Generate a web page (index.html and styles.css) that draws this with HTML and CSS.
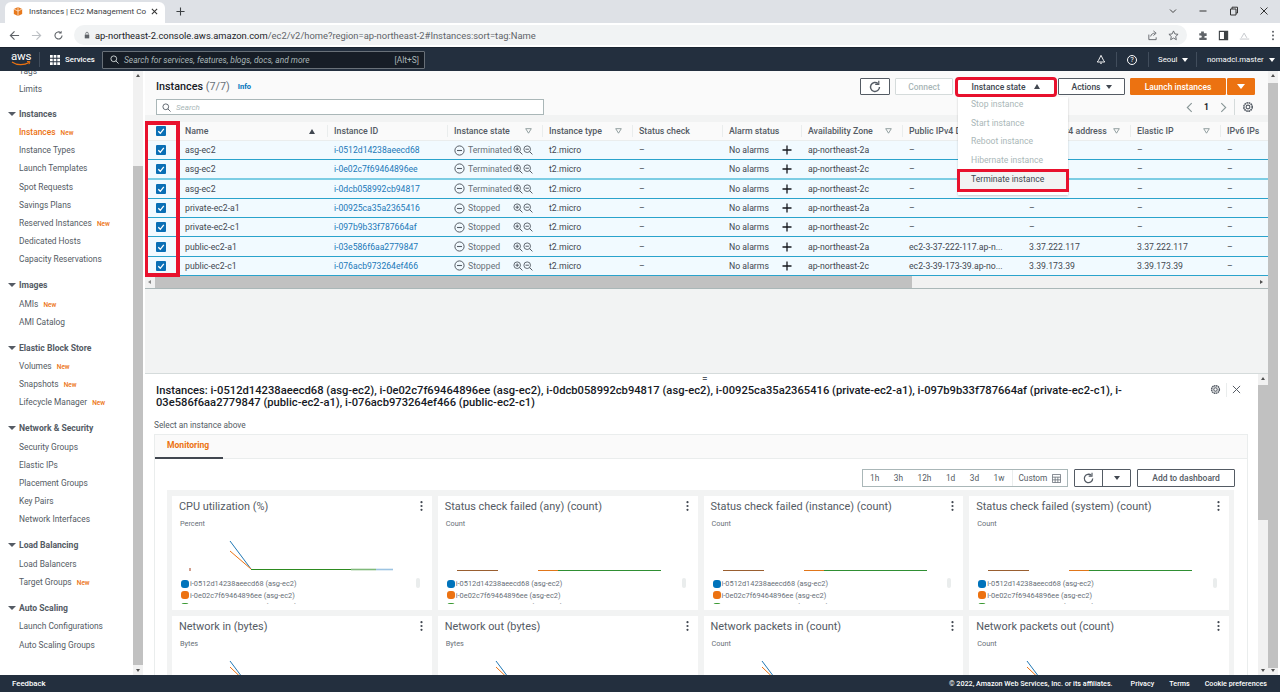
FILE: index.html
```html
<!DOCTYPE html>
<html lang="en">
<head>
<meta charset="utf-8">
<title>Instances | EC2 Management Console</title>
<link rel="stylesheet" href="styles.css">
</head>
<body>
<svg class="defs" width="0" height="0" aria-hidden="true">
  <symbol id="i-gear" viewBox="0 0 12 12"><circle cx="6" cy="6" r="1.9" fill="none" stroke="currentColor" stroke-width="1.1"/><circle cx="6" cy="6" r="4.2" fill="none" stroke="currentColor" stroke-width="1.6" stroke-dasharray="1.7 .5"/></symbol>
  <symbol id="i-refresh" viewBox="0 0 14 14"><path d="M11.5 7a4.5 4.5 0 1 1-1.5-3.4" fill="none" stroke="currentColor" stroke-width="1.4"/><path d="M10.8.8v3.6H7.2" fill="none" stroke="currentColor" stroke-width="1.2"/></symbol>
  <symbol id="i-stop" viewBox="0 0 11 11"><circle cx="5.5" cy="5.5" r="4.6" fill="none" stroke="currentColor" stroke-width="1"/><path d="M3 5.5h5" stroke="currentColor" stroke-width="1.1"/></symbol>
  <symbol id="i-zin" viewBox="0 0 10 10"><circle cx="4.2" cy="4.2" r="3.3" fill="none" stroke="currentColor" stroke-width=".9"/><path d="M2.5 4.2h3.4M4.2 2.5v3.4M6.6 6.6l2.8 2.8" stroke="currentColor" stroke-width="1"/></symbol>
  <symbol id="i-zout" viewBox="0 0 10 10"><circle cx="4.2" cy="4.2" r="3.3" fill="none" stroke="currentColor" stroke-width=".9"/><path d="M2.5 4.2h3.4M6.6 6.6l2.8 2.8" stroke="currentColor" stroke-width="1"/></symbol>
  <symbol id="i-plus" viewBox="0 0 10 10"><path d="M5 .5v9M.5 5h9" stroke="currentColor" stroke-width="1.3"/></symbol>
  <symbol id="i-check" viewBox="0 0 10 10"><rect width="10" height="10" rx="1" fill="#0a6fb5"/><path d="M2.3 5.2l2 2.1 3.5-4.5" fill="none" stroke="#fff" stroke-width="1.3"/></symbol>
  <symbol id="i-filter" viewBox="0 0 7 6"><path d="M.7.7h5.6L3.5 5.2z" fill="none" stroke="currentColor" stroke-width=".9"/></symbol>
  <symbol id="i-kebab" viewBox="0 0 3 10"><circle cx="1.5" cy="1.2" r="1.1"/><circle cx="1.5" cy="5" r="1.1"/><circle cx="1.5" cy="8.8" r="1.1"/></symbol>
  <symbol id="c-cpu" viewBox="0 0 260 46"><path d="M18 38v3" stroke="#a5401e" stroke-width="1"/><path d="M58 11l21 28" stroke="#1f77b4" fill="none"/><path d="M58 21l21 18" stroke="#ec7211" fill="none"/><path d="M79 39.5h100" stroke="#2d8a1f" stroke-width="1"/><path d="M179 39.5h25" stroke="#7fb97a" stroke-width="1.6"/><path d="M204 39.5h17" stroke="#9cc4e2" stroke-width="1.6"/></symbol>
  <symbol id="c-status" viewBox="0 0 260 46"><path d="M19 40.5h41" stroke="#9a5f30" stroke-width="1"/><path d="M100 40.5h20" stroke="#e1761a" stroke-width="1"/><path d="M120 40.5h103" stroke="#2f8f33" stroke-width="1"/></symbol>
  <symbol id="c-net" viewBox="0 0 260 46"><path d="M58 11l21 28" stroke="#1f77b4" fill="none"/><path d="M58 17l21 20" stroke="#ec7211" fill="none"/></symbol>
</svg>

<header class="tabstrip">
  <div class="tab">
    <svg class="favicon" viewBox="0 0 12 12"><path d="M6 .5l5 2.500v6L6 11.500 1 9V3z" fill="#e8791c"/><path d="M6 .5v11M1 3l5 2.500L11 3" stroke="#fff" stroke-width=".8" fill="none"/></svg>
    <span class="tab-title">Instances | EC2 Management Co</span>
    <svg class="tab-x" viewBox="0 0 8 8"><path d="M1 1l6 6M7 1L1 7" stroke="#333" stroke-width="1.2"/></svg>
  </div>
  <svg class="tab-new" viewBox="0 0 10 10"><path d="M5 .5v9M.5 5h9" stroke="#3c4043" stroke-width="1.2"/></svg>
  <div class="win">
    <svg viewBox="0 0 10 10"><path d="M2 3.500L5 6.500 8 3.500" fill="none" stroke="#444" stroke-width="1"/></svg>
    <svg viewBox="0 0 10 10"><path d="M1.500 5h7" stroke="#333" stroke-width="1"/></svg>
    <svg viewBox="0 0 10 10"><path d="M1.500 3H7v6H1.500zM3 3V1.200h5.500V7H7" fill="none" stroke="#333" stroke-width="1"/></svg>
    <svg viewBox="0 0 10 10"><path d="M1.500 1.500l7 7M8.500 1.500l-7 7" stroke="#333" stroke-width="1"/></svg>
  </div>
</header>

<nav class="toolbar">
  <svg class="tb-ic" viewBox="0 0 12 12"><path d="M11 6H2M6 1.500L1.500 6 6 10.500" fill="none" stroke="#5f6368" stroke-width="1.300"/></svg>
  <svg class="tb-ic" viewBox="0 0 12 12"><path d="M1 6h9M6 1.500L10.500 6 6 10.500" fill="none" stroke="#bcc0c4" stroke-width="1.300"/></svg>
  <svg class="tb-ic" viewBox="0 0 14 14"><path d="M11.500 7a4.500 4.500 0 1 1-1.500-3.400" fill="none" stroke="#5f6368" stroke-width="1.400"/><path d="M11 .8v3.600H7.400z" fill="#5f6368"/></svg>
  <div class="omnibox">
    <svg class="lock" viewBox="0 0 8 10"><path d="M1 4.500h6V9.500H1z" fill="#5f6368"/><path d="M2.300 4.500V3a1.700 1.700 0 0 1 3.400 0v1.500" fill="none" stroke="#5f6368"/></svg>
    <span class="url">ap-northeast-2.console.aws.amazon.com<span class="url-dim">/ec2/v2/home?region=ap-northeast-2#Instances:sort=tag:Name</span></span>
    <svg class="omni-ic share" viewBox="0 0 12 12"><path d="M2 5v5.500h8V8M4 7c.5-2.500 2.500-3.500 4.500-3.500M7 1l3 2.500L7 6" fill="none" stroke="#5f6368"/></svg>
    <svg class="omni-ic" viewBox="0 0 12 12"><path d="M6 1l1.500 3.300 3.500.4-2.600 2.400.7 3.500L6 8.800l-3.100 1.800.7-3.500L1 4.700l3.500-.4z" fill="none" stroke="#5f6368"/></svg>
  </div>
  <svg class="ext" viewBox="0 0 12 12"><path d="M4.500 1.500h3v2h3v3h-1.500a1 1 0 0 0 0 2h1.500v2.500h-8v-2.500H4a1.200 1.200 0 0 0 0-2.500H2.500v-2.500h2z" fill="#5f6368"/></svg>
  <svg class="ext" viewBox="0 0 12 12"><path d="M1.500 1.500h9v9h-9z" fill="none" stroke="#3c4043" stroke-width="1.200"/><path d="M6.500 1.500h4v9h-4z" fill="#3c4043"/></svg>
  <svg class="ext" viewBox="0 0 14 12"><path d="M1 10.500h12M3 9l3.500-6L10 9" fill="none" stroke="#b8bcc0"/></svg>
  <svg class="ext dots" viewBox="0 0 4 12"><circle cx="2" cy="2" r="1.100" fill="#5f6368"/><circle cx="2" cy="6" r="1.100" fill="#5f6368"/><circle cx="2" cy="10" r="1.100" fill="#5f6368"/></svg>
</nav>

<header class="awsbar">
  <div class="logo"><span class="logo-text">aws</span><svg class="smile" viewBox="0 0 20 5"><path d="M1 1c5 3.500 12 3.500 17 .5" fill="none" stroke="#ec7211" stroke-width="1.200"/><path d="M16 .5l3 .2-1 2.500" fill="none" stroke="#ec7211"/></svg></div>
  <span class="aws-sep"></span>
  <svg class="grid-ic" viewBox="0 0 11 11"><path d="M0 0h3v3H0zM4 0h3v3H4zM8 0h3v3H8zM0 4h3v3H0zM4 4h3v3H4zM8 4h3v3H8zM0 8h3v3H0zM4 8h3v3H4zM8 8h3v3H8z" fill="#fff"/></svg>
  <span class="services">Services</span>
  <div class="aws-search">
    <svg class="s-ic" viewBox="0 0 10 10"><circle cx="4.200" cy="4.200" r="3.200" fill="none" stroke="#d5dbdb"/><path d="M6.500 6.500l3 3" stroke="#d5dbdb"/></svg>
    <span class="s-ph">Search for services, features, blogs, docs, and more</span>
    <span class="s-key">[Alt+S]</span>
  </div>
  <svg class="bell" viewBox="0 0 12 12"><path d="M6 1L9 7l1.500 2h-9L3 7z" fill="none" stroke="#fff" stroke-width="1.100"/><path d="M4.800 10.500h2.400" stroke="#fff"/></svg>
  <span class="aws-sep s2"></span>
  <span class="help">?</span>
  <span class="aws-sep s3"></span>
  <span class="aws-menu seoul">Seoul <i class="tri-d white"></i></span>
  <span class="aws-sep s4"></span>
  <span class="aws-menu user">nomadcl.master <i class="tri-d white"></i></span>
</header>

<main class="layout">
  <aside class="sidebar">
    <a class="nav-item first">Tags</a>
    <a class="nav-item limits">Limits</a>
    <h3 class="nav-head"><i class="tri-d grey"></i>Instances</h3>
    <a class="nav-item active">Instances <em class="new">New</em></a>
    <a class="nav-item">Instance Types</a>
    <a class="nav-item">Launch Templates</a>
    <a class="nav-item">Spot Requests</a>
    <a class="nav-item">Savings Plans</a>
    <a class="nav-item">Reserved Instances <em class="new">New</em></a>
    <a class="nav-item">Dedicated Hosts</a>
    <a class="nav-item">Capacity Reservations</a>
    <h3 class="nav-head"><i class="tri-d grey"></i>Images</h3>
    <a class="nav-item">AMIs <em class="new">New</em></a>
    <a class="nav-item">AMI Catalog</a>
    <h3 class="nav-head"><i class="tri-d grey"></i>Elastic Block Store</h3>
    <a class="nav-item">Volumes <em class="new">New</em></a>
    <a class="nav-item">Snapshots <em class="new">New</em></a>
    <a class="nav-item">Lifecycle Manager <em class="new">New</em></a>
    <h3 class="nav-head"><i class="tri-d grey"></i>Network &amp; Security</h3>
    <a class="nav-item">Security Groups</a>
    <a class="nav-item">Elastic IPs</a>
    <a class="nav-item">Placement Groups</a>
    <a class="nav-item">Key Pairs</a>
    <a class="nav-item">Network Interfaces</a>
    <h3 class="nav-head"><i class="tri-d grey"></i>Load Balancing</h3>
    <a class="nav-item">Load Balancers</a>
    <a class="nav-item">Target Groups <em class="new">New</em></a>
    <h3 class="nav-head"><i class="tri-d grey"></i>Auto Scaling</h3>
    <a class="nav-item">Launch Configurations</a>
    <a class="nav-item">Auto Scaling Groups</a>
  </aside>
  <div class="vscroll side-scroll"><i class="arrow-up"></i><b class="thumb"></b><i class="arrow-down"></i></div>

  <div class="content">
    <section class="top">
      <div class="bar">
        <h1 class="page-title">Instances <span class="count">(7/7)</span></h1>
        <a class="info">Info</a>
        <button class="btn icon-btn"><svg class="btn-ic"><use href="#i-refresh"/></svg></button>
        <button class="btn disabled">Connect</button>
        <button class="btn state-btn">Instance state <i class="tri-u"></i></button>
        <button class="btn actions">Actions <i class="tri-d dark"></i></button>
        <div class="launch"><button class="btn primary">Launch instances</button><button class="btn primary caret"><i class="tri-d white big"></i></button></div>
      </div>
      <div class="bar two">
        <label class="search"><svg class="search-ic" viewBox="0 0 10 10"><circle cx="4.200" cy="4.200" r="3.200" fill="none" stroke="#545b64"/><path d="M6.500 6.500l3 3" stroke="#545b64"/></svg><span class="search-ph">Search</span></label>
        <div class="pager">
          <svg class="pg-arrow" viewBox="0 0 6 10"><path d="M5 1L1 5l4 4" fill="none" stroke="#879596"/></svg>
          <span class="pg-num">1</span>
          <svg class="pg-arrow" viewBox="0 0 6 10"><path d="M1 1l4 4-4 4" fill="none" stroke="#879596"/></svg>
          <span class="pg-sep"></span>
          <svg class="pg-gear"><use href="#i-gear"/></svg>
        </div>
      </div>

      <div class="table">
        <div class="row head">
          <div class="cell cb"><svg class="check"><use href="#i-check"/></svg></div>
          <div class="cell">Name<i class="tri-u sort"></i></div>
          <div class="cell">Instance ID</div>
          <div class="cell">Instance state<svg class="filter"><use href="#i-filter"/></svg></div>
          <div class="cell">Instance type<svg class="filter"><use href="#i-filter"/></svg></div>
          <div class="cell">Status check</div>
          <div class="cell">Alarm status</div>
          <div class="cell">Availability Zone<svg class="filter"><use href="#i-filter"/></svg></div>
          <div class="cell">Public IPv4 DNS<svg class="filter"><use href="#i-filter"/></svg></div>
          <div class="cell">Public IPv4 address<svg class="filter"><use href="#i-filter"/></svg></div>
          <div class="cell">Elastic IP<svg class="filter"><use href="#i-filter"/></svg></div>
          <div class="cell">IPv6 IPs</div>
        </div>

        <div class="row">
          <div class="cell cb"><svg class="check"><use href="#i-check"/></svg></div>
          <div class="cell">asg-ec2</div><div class="cell link">i-0512d14238aeecd68</div>
          <div class="cell state"><svg class="st-ic"><use href="#i-stop"/></svg><span class="st-tx">Terminated</span><svg class="z-ic"><use href="#i-zin"/></svg><svg class="z-ic"><use href="#i-zout"/></svg></div>
          <div class="cell">t2.micro</div><div class="cell">–</div>
          <div class="cell">No alarms<svg class="plus"><use href="#i-plus"/></svg></div>
          <div class="cell">ap-northeast-2a</div><div class="cell">–</div><div class="cell">–</div><div class="cell">–</div><div class="cell">–</div>
        </div>
        <div class="row thick">
          <div class="cell cb"><svg class="check"><use href="#i-check"/></svg></div>
          <div class="cell">asg-ec2</div><div class="cell link">i-0e02c7f69464896ee</div>
          <div class="cell state"><svg class="st-ic"><use href="#i-stop"/></svg><span class="st-tx">Terminated</span><svg class="z-ic"><use href="#i-zin"/></svg><svg class="z-ic"><use href="#i-zout"/></svg></div>
          <div class="cell">t2.micro</div><div class="cell">–</div>
          <div class="cell">No alarms<svg class="plus"><use href="#i-plus"/></svg></div>
          <div class="cell">ap-northeast-2c</div><div class="cell">–</div><div class="cell">–</div><div class="cell">–</div><div class="cell">–</div>
        </div>
        <div class="row">
          <div class="cell cb"><svg class="check"><use href="#i-check"/></svg></div>
          <div class="cell">asg-ec2</div><div class="cell link">i-0dcb058992cb94817</div>
          <div class="cell state"><svg class="st-ic"><use href="#i-stop"/></svg><span class="st-tx">Terminated</span><svg class="z-ic"><use href="#i-zin"/></svg><svg class="z-ic"><use href="#i-zout"/></svg></div>
          <div class="cell">t2.micro</div><div class="cell">–</div>
          <div class="cell">No alarms<svg class="plus"><use href="#i-plus"/></svg></div>
          <div class="cell">ap-northeast-2c</div><div class="cell">–</div><div class="cell">–</div><div class="cell">–</div><div class="cell">–</div>
        </div>
        <div class="row">
          <div class="cell cb"><svg class="check"><use href="#i-check"/></svg></div>
          <div class="cell">private-ec2-a1</div><div class="cell link">i-00925ca35a2365416</div>
          <div class="cell state"><svg class="st-ic"><use href="#i-stop"/></svg><span class="st-tx">Stopped</span><svg class="z-ic"><use href="#i-zin"/></svg><svg class="z-ic"><use href="#i-zout"/></svg></div>
          <div class="cell">t2.micro</div><div class="cell">–</div>
          <div class="cell">No alarms<svg class="plus"><use href="#i-plus"/></svg></div>
          <div class="cell">ap-northeast-2a</div><div class="cell">–</div><div class="cell">–</div><div class="cell">–</div><div class="cell">–</div>
        </div>
        <div class="row">
          <div class="cell cb"><svg class="check"><use href="#i-check"/></svg></div>
          <div class="cell">private-ec2-c1</div><div class="cell link">i-097b9b33f787664af</div>
          <div class="cell state"><svg class="st-ic"><use href="#i-stop"/></svg><span class="st-tx">Stopped</span><svg class="z-ic"><use href="#i-zin"/></svg><svg class="z-ic"><use href="#i-zout"/></svg></div>
          <div class="cell">t2.micro</div><div class="cell">–</div>
          <div class="cell">No alarms<svg class="plus"><use href="#i-plus"/></svg></div>
          <div class="cell">ap-northeast-2c</div><div class="cell">–</div><div class="cell">–</div><div class="cell">–</div><div class="cell">–</div>
        </div>
        <div class="row">
          <div class="cell cb"><svg class="check"><use href="#i-check"/></svg></div>
          <div class="cell">public-ec2-a1</div><div class="cell link">i-03e586f6aa2779847</div>
          <div class="cell state"><svg class="st-ic"><use href="#i-stop"/></svg><span class="st-tx">Stopped</span><svg class="z-ic"><use href="#i-zin"/></svg><svg class="z-ic"><use href="#i-zout"/></svg></div>
          <div class="cell">t2.micro</div><div class="cell">–</div>
          <div class="cell">No alarms<svg class="plus"><use href="#i-plus"/></svg></div>
          <div class="cell">ap-northeast-2a</div><div class="cell">ec2-3-37-222-117.ap-n...</div><div class="cell">3.37.222.117</div><div class="cell">3.37.222.117</div><div class="cell">–</div>
        </div>
        <div class="row">
          <div class="cell cb"><svg class="check"><use href="#i-check"/></svg></div>
          <div class="cell">public-ec2-c1</div><div class="cell link">i-076acb973264ef466</div>
          <div class="cell state"><svg class="st-ic"><use href="#i-stop"/></svg><span class="st-tx">Stopped</span><svg class="z-ic"><use href="#i-zin"/></svg><svg class="z-ic"><use href="#i-zout"/></svg></div>
          <div class="cell">t2.micro</div><div class="cell">–</div>
          <div class="cell">No alarms<svg class="plus"><use href="#i-plus"/></svg></div>
          <div class="cell">ap-northeast-2c</div><div class="cell">ec2-3-39-173-39.ap-no...</div><div class="cell">3.39.173.39</div><div class="cell">3.39.173.39</div><div class="cell">–</div>
        </div>
      </div>
      <div class="hscroll"><i class="arrow-left"></i><b class="hthumb"></b><i class="arrow-right"></i></div>

      <div class="red-col"></div>
      <ul class="dropdown">
        <li>Stop instance</li>
        <li>Start instance</li>
        <li>Reboot instance</li>
        <li>Hibernate instance</li>
        <li class="term">Terminate instance</li>
      </ul>
    </section>

    <section class="lower">
      <span class="splitter">=</span>
      <div class="lower-main">
        <div class="lower-head">
          <h2 class="lower-title">Instances: i-0512d14238aeecd68 (asg-ec2), i-0e02c7f69464896ee (asg-ec2), i-0dcb058992cb94817 (asg-ec2), i-00925ca35a2365416 (private-ec2-a1), i-097b9b33f787664af (private-ec2-c1), i-03e586f6aa2779847 (public-ec2-a1), i-076acb973264ef466 (public-ec2-c1)</h2>
          <svg class="lh-gear"><use href="#i-gear"/></svg>
          <span class="lh-sep"></span>
          <svg class="lh-x" viewBox="0 0 10 10"><path d="M1 1l8 8M9 1L1 9" stroke="#545b64" stroke-width="1.100"/></svg>
        </div>
        <p class="select-note">Select an instance above</p>
        <div class="tabs">
          <div class="tab-head"><span class="mon-tab">Monitoring</span></div>
          <div class="tab-body">
            <div class="range-row">
              <div class="range">
                <span>1h</span><span>3h</span><span>12h</span><span>1d</span><span>3d</span><span>1w</span>
                <span class="custom">Custom <svg class="cal" viewBox="0 0 10 10"><path d="M.5.5h9v9h-9zM.5 3.500h9M3.500 3.500v6M6.500 3.500v6M.5 6.500h9" fill="none" stroke="#687078" stroke-width=".9"/></svg></span>
              </div>
              <div class="split"><span class="split-a"><svg class="btn-ic"><use href="#i-refresh"/></svg></span><span class="split-b"><i class="tri-d dark"></i></span></div>
              <button class="btn add">Add to dashboard</button>
            </div>
            <div class="cards">
              <article class="card">
                <div class="card-top"><h4 class="card-title">CPU utilization (%)</h4><svg class="kebab"><use href="#i-kebab"/></svg></div>
                <p class="unit">Percent</p>
                <svg class="chart"><use href="#c-cpu"/></svg>
                <div class="legend"><p class="lg"><i class="dot blue"></i>i-0512d14238aeecd68 (asg-ec2)</p><p class="lg"><i class="dot orange"></i>i-0e02c7f69464896ee (asg-ec2)</p><p class="lg"><i class="dot green"></i>i-0dcb058992cb94817 (asg-ec2)</p><b class="lg-thumb"></b></div>
              </article>
              <article class="card">
                <div class="card-top"><h4 class="card-title">Status check failed (any) (count)</h4><svg class="kebab"><use href="#i-kebab"/></svg></div>
                <p class="unit">Count</p>
                <svg class="chart"><use href="#c-status"/></svg>
                <div class="legend"><p class="lg"><i class="dot blue"></i>i-0512d14238aeecd68 (asg-ec2)</p><p class="lg"><i class="dot orange"></i>i-0e02c7f69464896ee (asg-ec2)</p><p class="lg"><i class="dot green"></i>i-0dcb058992cb94817 (asg-ec2)</p><b class="lg-thumb"></b></div>
              </article>
              <article class="card">
                <div class="card-top"><h4 class="card-title">Status check failed (instance) (count)</h4><svg class="kebab"><use href="#i-kebab"/></svg></div>
                <p class="unit">Count</p>
                <svg class="chart"><use href="#c-status"/></svg>
                <div class="legend"><p class="lg"><i class="dot blue"></i>i-0512d14238aeecd68 (asg-ec2)</p><p class="lg"><i class="dot orange"></i>i-0e02c7f69464896ee (asg-ec2)</p><p class="lg"><i class="dot green"></i>i-0dcb058992cb94817 (asg-ec2)</p><b class="lg-thumb"></b></div>
              </article>
              <article class="card">
                <div class="card-top"><h4 class="card-title">Status check failed (system) (count)</h4><svg class="kebab"><use href="#i-kebab"/></svg></div>
                <p class="unit">Count</p>
                <svg class="chart"><use href="#c-status"/></svg>
                <div class="legend"><p class="lg"><i class="dot blue"></i>i-0512d14238aeecd68 (asg-ec2)</p><p class="lg"><i class="dot orange"></i>i-0e02c7f69464896ee (asg-ec2)</p><p class="lg"><i class="dot green"></i>i-0dcb058992cb94817 (asg-ec2)</p><b class="lg-thumb"></b></div>
              </article>
              <article class="card">
                <div class="card-top"><h4 class="card-title">Network in (bytes)</h4><svg class="kebab"><use href="#i-kebab"/></svg></div>
                <p class="unit">Bytes</p>
                <svg class="chart"><use href="#c-net"/></svg>
              </article>
              <article class="card">
                <div class="card-top"><h4 class="card-title">Network out (bytes)</h4><svg class="kebab"><use href="#i-kebab"/></svg></div>
                <p class="unit">Bytes</p>
                <svg class="chart"><use href="#c-net"/></svg>
              </article>
              <article class="card">
                <div class="card-top"><h4 class="card-title">Network packets in (count)</h4><svg class="kebab"><use href="#i-kebab"/></svg></div>
                <p class="unit">Count</p>
                <svg class="chart"><use href="#c-net"/></svg>
              </article>
              <article class="card">
                <div class="card-top"><h4 class="card-title">Network packets out (count)</h4><svg class="kebab"><use href="#i-kebab"/></svg></div>
                <p class="unit">Count</p>
                <svg class="chart"><use href="#c-net"/></svg>
              </article>
            </div>
          </div>
        </div>
      </div>
      <div class="vscroll lower-scroll"><i class="arrow-up"></i><b class="thumb"></b><i class="arrow-down"></i></div>
    </section>
  </div>
  <div class="vscroll page-scroll"><i class="arrow-up"></i><b class="thumb"></b><i class="arrow-down"></i></div>
</main>

<footer class="footer">
  <span class="feedback">Feedback</span>
  <span class="copy">© 2022, Amazon Web Services, Inc. or its affiliates.</span>
  <span>Privacy</span>
  <span>Terms</span>
  <span>Cookie preferences</span>
</footer>
</body>
</html>
```

FILE: styles.css
```css
* { box-sizing: border-box; }
html, body { margin: 0; height: 100%; }
body {
  width: 1280px; height: 692px; overflow: hidden;
  display: flex; flex-direction: column;
  font-family: Roboto, "Liberation Sans", sans-serif;
  font-size: 9px; color: #16191f; background: #fff;
}
.defs { position: absolute; }
h1, h2, h3, h4, p, ul { margin: 0; padding: 0; font-weight: normal; }
i, em { font-style: normal; }
button { font-family: inherit; }

/* browser chrome */
.tabstrip { height: 23px; background: #dee1e6; display: flex; align-items: flex-end; flex: none; }
.tab { width: 160px; height: 21px; margin-left: 5px; background: #fff; border-radius: 6px 6px 0 0; display: flex; align-items: center; padding: 0 7px 3px 8px; }
.favicon { width: 10px; height: 11px; flex: none; }
.tab-title { margin-left: 6px; flex: none; white-space: nowrap; font-size: 8.1px; color: #3c4043; }
.tab-x { width: 7px; height: 7px; margin-left: auto; flex: none; }
.tab-new { width: 9px; height: 9px; margin: 0 0 7px 11px; }
.win { margin-left: auto; display: flex; gap: 20.5px; padding: 0 11px 7px 0; }
.win svg { width: 10px; height: 10px; }
.toolbar { height: 24px; background: #fff; display: flex; align-items: center; padding-left: 9px; flex: none; }
.tb-ic { width: 11px; height: 11px; margin-right: 11px; }
.omnibox { width: 1113px; height: 20px; margin-left: -1px; background: #f1f3f4; border-radius: 10px; display: flex; align-items: center; padding: 0 8px 0 10px; }
.lock { width: 6px; height: 8px; flex: none; margin-right: 5px; }
.url { font-size: 9.4px; color: #202124; white-space: nowrap; }
.url-dim { color: #5f6368; }
.omni-ic { width: 11px; height: 11px; margin-left: 10px; }
.share { margin-left: auto; }
.ext { width: 11px; height: 11px; margin-left: 10px; flex: none; }
.ext:first-of-type { margin-left: 0; }
.dots { width: 4px; margin-left: 21px; }

/* aws nav */
.awsbar { height: 24px; background: #232f3e; display: flex; align-items: center; flex: none; color: #fff; border-top: 1px solid #1a2430; }
.logo { width: 39px; padding-left: 11px; display: flex; flex-direction: column; align-items: flex-start; height: 20px; }
.logo-text { font-size: 11.5px; line-height: 12px; letter-spacing: -.2px; }
.smile { width: 20px; height: 5px; margin-top: -1px; }
.aws-sep { width: 1px; height: 15px; background: #414d5c; flex: none; }
.grid-ic { width: 10px; height: 10px; margin-left: 10px; }
.services { margin-left: 5px; font-size: 7.8px; font-weight: 500; width: 37px; }
.aws-search { width: 323px; height: 18px; background: #161d26; border: 1px solid #687078; border-radius: 1px; display: flex; align-items: center; padding: 0 5px 0 7px; color: #aab7b8; font-size: 8.4px; }
.s-ic { width: 9px; height: 9px; }
.s-ph { margin-left: 5px; font-style: italic; }
.s-key { margin-left: auto; }
.bell { width: 10px; height: 11px; margin-left: 671px; }
.s2 { margin-left: 10px; }
.help { width: 10px; height: 10px; margin-left: 10px; border: 1px solid #fff; border-radius: 50%; font-size: 7.5px; line-height: 8px; text-align: center; }
.s3 { margin-left: 11px; }
.aws-menu { font-size: 7.8px; white-space: nowrap; display: flex; align-items: center; gap: 5px; }
.seoul { margin-left: 9px; width: 38px; }
.user { margin-left: 10px; }
.tri-d { display: inline-block; width: 0; height: 0; border: 3.5px solid transparent; border-bottom: 0; border-top: 4px solid #fff; }
.tri-d.white { border-top-color: #fff; }
.tri-d.grey { border-top-color: #545b64; margin-right: 3px; border-left-width: 4px; border-right-width: 4px; }
.tri-d.dark { border-top-color: #414750; }
.tri-d.big { border-left-width: 4px; border-right-width: 4px; border-top-width: 5px; }
.tri-u { display: inline-block; width: 0; height: 0; border: 3.5px solid transparent; border-top: 0; border-bottom: 5px solid #414750; margin-left: 5px; }

/* layout */
.layout { flex: 1; display: flex; min-height: 0; }
.sidebar { width: 133px; flex: none; background: #fff; overflow: hidden; padding-left: 8px; }
.nav-item { display: block; height: 18.15px; line-height: 18px; padding-left: 11px; font-size: 8.4px; color: #545b64; white-space: nowrap; }
.nav-item.first { margin-top: -9px; }
.nav-item.limits { margin-bottom: -1.5px; }
.nav-item.active { color: #ec7211; font-weight: 500; }
.new { font-size: 6.5px; color: #ec7211; margin-left: 3px; font-weight: 500; }
.nav-head { height: 18.8px; line-height: 18px; margin-top: 7.5px; font-size: 8.6px; font-weight: 700; color: #545b64; white-space: nowrap; display: flex; align-items: center; }
.vscroll { flex: none; width: 10px; background: #f1f1f1; display: flex; flex-direction: column; align-items: center; }
.thumb { display: block; width: 100%; background: #c1c1c1; }
.arrow-up, .arrow-down { flex: none; width: 0; height: 0; border: 2.5px solid transparent; margin: 3px 0; }
.arrow-up { border-top: 0; border-bottom: 3px solid #505050; }
.arrow-down { border-bottom: 0; border-top: 3px solid #505050; }
.side-scroll .thumb { height: 499px; margin-top: 86px; }
.side-scroll { margin-right: 2px; }
.side-scroll .arrow-down { margin-top: 4px; }
.page-scroll { width: 12px; border-right: 2px solid #fff; }
.page-scroll .thumb { height: 587px; margin-top: 3px; }
.page-scroll .arrow-down { margin-top: 1px; }
.content { flex: 1; min-width: 0; display: flex; flex-direction: column; }

/* top panel */
.top { position: relative; height: 302px; flex: none; background: #f2f3f3; }
.bar { padding: 7px 13px 0 11px; height: 24px; display: flex; align-items: center; gap: 5px; background: #fafafa; }
.page-title { font-size: 10.8px; font-weight: 500; color: #16191f; }
.count { color: #687078; font-weight: 400; }
.info { font-size: 7.5px; font-weight: 700; color: #0073bb; margin-left: 3px; margin-right: auto; }
.btn { height: 17px; background: #fff; border: 1px solid #545b64; border-radius: 1px; font-size: 8.5px; font-weight: 500; color: #545b64; padding: 0; display: flex; align-items: center; justify-content: center; }
.btn-ic { width: 14px; height: 14px; color: #545b64; }
.icon-btn { width: 30px; }
.disabled { width: 58px; color: #aab7b8; border-color: #d5dbdb; }
.state-btn { width: 96px; height: 14px; margin: 0 -1px 0 0; border: 0; outline: 3px solid #e8112d; gap: 4px; color: #414750; }
.actions { width: 67px; gap: 5px; color: #414750; }
.launch { display: flex; gap: 1px; }
.primary { background: #ec7211; border-color: #ec7211; color: #fff; width: 96px; }
.caret { width: 28px; }
.two { height: 20px; padding-top: 4px; padding-right: 14px; gap: 0; }
.search { width: 388px; height: 16px; background: #fff; border: 1px solid #aab7b8; display: flex; align-items: center; padding-left: 5px; }
.search-ic { width: 9px; height: 9px; }
.search-ph { margin-left: 5px; font-size: 8px; font-style: italic; color: #aab7b8; }
.pager { margin-left: auto; display: flex; align-items: center; }
.pg-arrow { width: 7px; height: 11px; }
.pg-num { margin: 0 11px; font-size: 8.5px; font-weight: 700; color: #16191f; }
.pg-sep { width: 1px; height: 16px; background: #d5dbdb; margin: 0 7px 0 7px; }
.pg-gear { width: 12px; height: 12px; color: #545b64; }

/* table */
.table { margin-top: 7px; }
.row { display: grid; grid-template-columns: 33px 149px 120px 95px 90px 90px 79px 101px 120px 108px 90px 48px; height: 19.3px; background: #f1faff; border-bottom: 1px solid #2aa3cc; align-items: center; overflow: hidden; }
.row.thick { border-bottom-color: #7ccde4; border-bottom-width: 2px; }
.row.head { height: 19px; background: #fafafa; border-bottom: 1px solid #eaeded; font-weight: 500; color: #545b64; }
.row.head .cell { font-size: 8.8px; font-weight: 500; position: relative; padding-right: 10px; color: #545b64; }
.row.head .cell + .cell::before { content: ""; position: absolute; left: 0; top: 3px; bottom: 3px; width: 1px; background: #eaeded; }
.cell { padding-left: 7px; font-size: 8.7px; color: #414750; white-space: nowrap; display: flex; align-items: center; overflow: hidden; height: 100%; }
.cell.cb { padding-left: 11px; }
.check { width: 10px; height: 10px; }
.link { color: #1a78b8; font-size: 8.6px; }
.sort { margin-left: auto; margin-right: 2px; }
.filter { width: 7px; height: 6px; color: #879596; margin-left: auto; flex: none; }
.state { color: #687078; }
.st-ic { width: 11px; height: 11px; color: #545b64; flex: none; }
.st-tx { width: 44px; margin-left: 3px; flex: none; overflow: visible; }
.z-ic { width: 10px; height: 10px; color: #545b64; flex: none; }
.st-tx + .z-ic { margin-left: 1px; }
.plus { width: 10px; height: 10px; color: #16191f; margin-left: 13px; flex: none; }
.hscroll { height: 13px; background: #f1f1f1; border-bottom: 1px solid #aab7b8; display: flex; align-items: center; padding-left: 3px; }
.hthumb { display: block; width: 757px; height: 100%; margin-left: 4px; background: #c1c1c1; }
.arrow-left, .arrow-right { width: 0; height: 0; border: 2.5px solid transparent; flex: none; }
.arrow-left { border-left: 0; border-right: 3px solid #888; }
.arrow-right { border-right: 0; border-left: 3px solid #505050; margin-left: auto; margin-right: 5px; }
.red-col { position: absolute; left: 0; top: 50px; width: 35px; height: 156px; border: 4px solid #e8112d; border-left-width: 3px; pointer-events: none; }
.dropdown { position: absolute; left: 813px; top: 26px; width: 110px; height: 98px; list-style: none; background: #fff; box-shadow: 0 1px 2px rgba(0,0,0,.2); }
.dropdown li { height: 18.7px; line-height: 15px; padding: 0 0 0 13px; font-size: 8.6px; color: #aab7b8; }
.dropdown li.term { position: absolute; left: -1px; top: 72px; width: 112px; height: 23px; line-height: 15px; padding-left: 11px; color: #414750; background: #f2f3f3; border: 3px solid #e8112d; }

/* lower panel */
.lower { position: relative; flex: 1; min-height: 0; display: flex; background: #fff; border-top: 1px solid #d5dbdb; overflow: hidden; }
.splitter { position: absolute; left: 557px; top: 0; font-size: 10px; line-height: 10px; color: #545b64; }
.lower-main { flex: 1; min-width: 0; padding: 11px 10px 0 9px; }
.lower-head { display: flex; align-items: flex-start; padding-left: 2px; min-height: 24px; }
.lower-title { width: 968px; font-size: 11.2px; line-height: 12px; font-weight: 500; color: #16191f; }
.lh-gear { width: 11px; height: 11px; margin: -1px 0 0 86px; color: #545b64; flex: none; }
.lh-sep { width: 1px; height: 14px; background: #eaeded; margin: -2px 5px 0 5px; flex: none; }
.lh-x { width: 9px; height: 9px; margin: 0; flex: none; }
.select-note { margin-top: 10px; height: 12px; line-height: 12px; font-size: 8.3px; color: #545b64; }
.tabs { margin-top: 3px; border: 1px solid #eaeded; border-bottom: 0; }
.tab-head { height: 24px; background: #fafafa; border-bottom: 1px solid #eaeded; }
.mon-tab { display: block; width: 68px; height: 24px; line-height: 21px; padding-left: 12px; font-size: 8.6px; font-weight: 700; color: #ec7211; border-bottom: 2px solid #414750; }
.tab-body { padding: 8px 13px 0 12px; }
.range-row { display: flex; justify-content: flex-end; align-items: center; gap: 6px; height: 23px; margin-right: -1px; padding-bottom: 1px; }
.range { width: 206px; height: 18px; border: 1px solid #aab7b8; display: flex; align-items: center; padding-left: 7px; gap: 14.5px; font-size: 8.3px; color: #545b64; }
.range .custom { margin-left: -6.5px; padding-left: 5px; display: flex; align-items: center; gap: 5px; white-space: nowrap; border-left: 1px solid #eaeded; height: 100%; }
.cal { width: 9px; height: 9px; }
.split { width: 57px; height: 18px; display: flex; border: 1px solid #545b64; border-radius: 1px; }
.split-a { width: 28px; display: flex; align-items: center; justify-content: center; border-right: 1px solid #545b64; }
.split-b { flex: 1; display: flex; align-items: center; justify-content: center; }
.split .btn-ic { width: 13px; height: 13px; }
.add { width: 98px; height: 18px; }
.cards { display: grid; grid-template-columns: repeat(4, minmax(0, 1fr)); grid-auto-rows: 114px; gap: 6px; padding: 6px 5px; background: #f2f3f3; }
.card { background: #fff; padding: 0 7px; position: relative; overflow: hidden; min-width: 0; }
.card-top { display: flex; align-items: center; justify-content: space-between; height: 20px; padding-right: 2px; }
.card-title { font-size: 10.9px; color: #545b64; white-space: nowrap; }
.kebab { width: 3px; height: 10px; fill: #414750; flex: none; }
.unit { height: 12px; line-height: 12px; margin: 2px 0 0 1px; font-size: 7.3px; color: #687078; }
.chart { display: block; width: 260px; height: 46px; margin-left: -7px; }
.legend { position: relative; height: 26px; margin-top: 2px; padding: 0 0 0 2px; overflow: hidden; }
.lg { height: 11.5px; line-height: 11px; display: flex; align-items: center; font-size: 7.4px; color: #687078; white-space: nowrap; }
.dot { width: 8px; height: 8px; border-radius: 3px; margin-right: 1px; flex: none; }
.blue { background: #0073bb; }
.orange { background: #ec7211; }
.green { background: #3b9a33; }
.lg-thumb { position: absolute; right: 5px; top: 0; width: 4px; height: 10px; border-radius: 2px; background: #eaeded; }
.lower-scroll .thumb { height: 135px; margin-top: 2px; }
.lower-scroll .arrow-down { margin-top: auto; }

/* footer */
.footer { height: 17px; flex: none; background: #232f3e; color: #fff; display: flex; align-items: center; gap: 15px; padding: 0 13px 0 12px; font-size: 7.2px; font-weight: 500; }
.feedback { margin-right: auto; font-size: 7.8px; }
.copy { margin-right: 3px; }
```
